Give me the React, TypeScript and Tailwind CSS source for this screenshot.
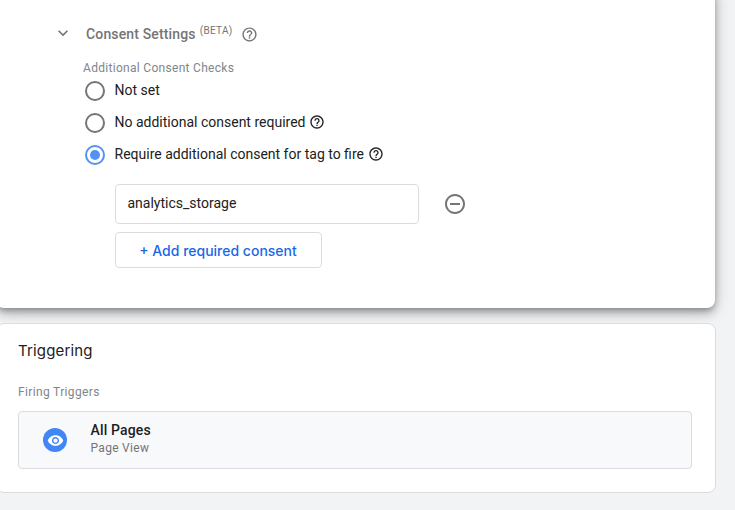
import React from "react";
import { MdExpandMore, MdHelpOutline, MdRemoveCircleOutline, MdVisibility } from "react-icons/md";

type OptionProps = { label: string; checked?: boolean; help?: boolean };

function Option({ label, checked = false, help = false }: OptionProps) {
  return (
    <div className="flex h-8 items-center">
      <span
        className={`mt-0.5 flex size-5 shrink-0 items-center justify-center rounded-full border-2 ${
          checked ? "border-[#5491f5]" : "border-[#757575]"
        }`}
      >
        {checked && <span className="size-2.5 rounded-full bg-[#5491f5]" />}
      </span>
      <span className="ml-[9.5px] text-sm whitespace-nowrap text-[#212121]">{label}</span>
      {help && <MdHelpOutline className="ml-1 size-4 text-[#212121]" />}
    </div>
  );
}

export default function App() {
  return (
    <div className="h-[510px] w-[735px] overflow-hidden bg-[#f1f3f4] font-['Roboto',sans-serif] text-[#212121]">
      <section className="-mt-3 -ml-1 h-[320px] w-[719px] rounded-lg bg-white pt-[34px] pl-[87px] shadow-[0_3px_5px_-1px_rgba(0,0,0,0.22),0_6px_10px_0_rgba(0,0,0,0.2),0_1px_18px_0_rgba(0,0,0,0.18)]">
        <div className="-ml-8 flex h-6 items-center text-[#757575]">
          <MdExpandMore className="mr-3 ml-0.5 size-5 -translate-y-px" />
          <h2 className="ml-px text-sm font-medium whitespace-nowrap tracking-[0.15px]">Consent Settings</h2>
          <span className="mb-2 ml-1 text-[10px] tracking-[0.3px]">(BETA)</span>
          <MdHelpOutline className="ml-2 size-[17px]" />
        </div>
        <div className="mt-3.5 text-xs leading-4 tracking-[0.3px] text-[#80868b]">Additional Consent Checks</div>
        <div className="-mt-0.5 pl-0.5">
          <Option label="Not set" />
          <Option label="No additional consent required" help />
          <Option label="Require additional consent for tag to fire" checked help />
        </div>
        <div className="mt-3.5 ml-8 flex items-center">
          <div className="flex h-10 w-[304px] items-center rounded border border-[#dadce0] pr-3 pl-[11.5px] pb-0.5 text-sm">
            analytics_storage
          </div>
          <MdRemoveCircleOutline className="ml-[23.5px] size-6 text-[#757575]" />
        </div>
        <button className="mt-2 ml-8 flex h-9 w-[207px] items-center justify-center rounded border border-[#dadce0] pt-0.5 pr-px font-['Inter',sans-serif] text-sm font-medium whitespace-nowrap text-[#1a67e8]">
          + Add required consent
        </button>
      </section>

      <section className="mt-[15px] -ml-1 h-[170px] w-[720px] rounded-lg border border-[#dadce0] bg-white pt-[17px] pl-[21px]">
        <h2 className="font-['Inter',sans-serif] text-[15px] leading-5 tracking-[0.15px]">Triggering</h2>
        <div className="mt-[23px] text-xs leading-4 tracking-[0.35px] text-[#80868b]">Firing Triggers</div>
        <div className="mt-[11px] flex h-[58px] w-[674px] items-center rounded border border-[#dadce0] bg-[#f8f9fa] pl-6">
          <span className="flex size-6 items-center justify-center rounded-full bg-[#4285f4]">
            <MdVisibility className="size-[17px] text-white" />
          </span>
          <div className="ml-[23.5px] pb-[3px]">
            <div className="text-sm leading-[18px] font-medium tracking-[0.15px]">All Pages</div>
            <div className="text-xs leading-[18px] tracking-[0.3px] text-[#757575]">Page View</div>
          </div>
        </div>
      </section>
    </div>
  );
}
